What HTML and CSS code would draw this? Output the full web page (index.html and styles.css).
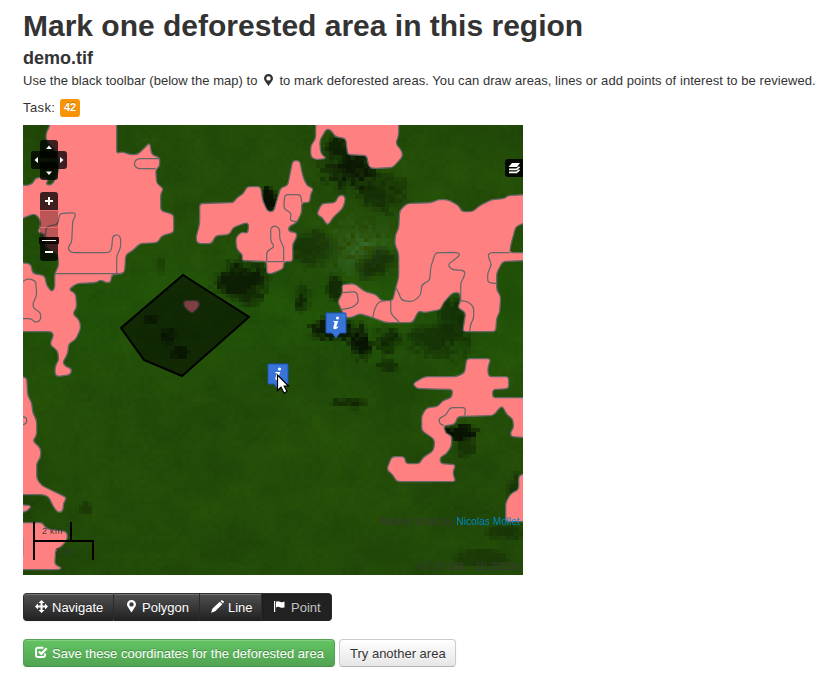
FILE: index.html
```html
<!DOCTYPE html>
<html lang="en">
<head>
<meta charset="utf-8">
<title>Mark one deforested area in this region</title>
<link rel="stylesheet" href="styles.css">
</head>
<body>
<main class="page">
  <h1><span>Mark one deforested area in this region</span></h1>
  <h3><span>demo.tif</span></h3>
  <p class="help"><span class="help-a">Use the black toolbar (below the map) to</span>
    <svg class="pin" width="9" height="12" viewBox="0 0 9 12"><path fill-rule="evenodd" d="M4.5 0A4.4 4.4 0 0 1 9 4.400C9 6 7.500 7.500 4.500 12C1.500 7.500 0 6 0 4.400A4.400 4.400 0 0 1 4.500 0ZM4.500 2.200a2.200 2.200 0 1 0 0 4.400a2.200 2.200 0 1 0 0-4.400Z"/></svg>
    <span class="help-b">to mark deforested areas. You can draw areas, lines or add points of interest to be reviewed.</span></p>
  <p class="task"><span>Task:</span><span class="label">42</span></p>

  <div class="map">
    <canvas class="terrain" id="terrain" width="116" height="104"></canvas>
    <svg class="layer" viewBox="23 125 500 450">
      <g id="areas" class="areas" transform="translate(-.3 .6)"></g>
      <g id="outlines" class="outlines" transform="translate(-.3 .6)"></g>
      <path class="sketch" d="M183 275L249 317L182 376L144 360L121 328Z"/>
      <defs>
        <g id="marker">
          <path class="marker" d="M1 .5H20a.5.5 0 0 1 .5.500V20a.5.5 0 0 1-.5.500H14.500L10.500 25.500L6.500 20.500H1a.5.500 0 0 1-.5-.5V1a.5.500 0 0 1 .5-.5Z"/>
          <circle cx="12" cy="5.500" r="1.600" fill="#fff"/>
          <path d="M8 8.600H12.700L10.800 14.600Q11.500 14.600 12.500 13.700L12.900 14.200Q11.300 16.700 9 16.700Q7.300 16.500 7.900 14.600L9.300 9.800L7.700 9.600Z" fill="#fff"/>
        </g>
      </defs>
      <use href="#marker" x="325.500" y="312.500"/>
      <use href="#marker" x="267.500" y="363.500"/>
      <path d="M277.500 375V390.500L281 387.200L284 393L287 391.500L284.200 386H288.500Z" fill="#fff" stroke="#000" stroke-width="1.200"/>
    </svg>

    <svg class="layer" viewBox="23 125 500 450">
      <g class="control">
        <rect x="40" y="140" width="18" height="18" rx="3"/>
        <rect x="40" y="162" width="18" height="18" rx="3"/>
        <rect x="31" y="151" width="18" height="18" rx="3"/>
        <rect x="49" y="151" width="18" height="18" rx="3"/>
        <path d="M40 210V195q0-3 3-3H55q3 0 3 3V210Z"/>
        <path d="M40 243H58V258q0 3-3 3H43q-3 0-3-3Z"/>
        <path d="M523 159H508q-3 0-3 3V174q0 3 3 3H523Z" fill-opacity=".88"/>
      </g>
      <path d="M40 210H58V243H40Z" fill="#300000" fill-opacity=".33"/>
      <path d="M40 210.500H58M40 227.500H58" stroke="#ff8080" stroke-opacity=".6"/>
      <rect x="39" y="237" width="20" height="7" rx="1" fill="#000" fill-opacity=".88"/>
      <path d="M46 149L49 145.500L52 149ZM46 171.500H52L49 175ZM38 157V163L34.500 160ZM60 157V163L63.500 160Z" fill="#fff"/>
      <path d="M42 240.500H56" stroke="#fff"/>
      <path d="M45 201H53M49 197V205M45 252H53" stroke="#fff" stroke-width="2"/>
      <path d="M512 163H520L517 167H508.500Z" fill="#fff"/>
      <path d="M509 169.300H516.500L519.500 166.800M509 172.300H516.500L519.500 169.800" fill="none" stroke="#fff" stroke-width="1.700"/>
    </svg>

    <div class="scale"><div class="km">2 km</div><div class="mi">2 mi</div></div>
    <div class="credit"><span>Marker Icons by</span> <a>Nicolas Mollet</a></div>
    <div class="position">-57.07556, -10.23598</div>
  </div>

  <div class="toolbar">
    <button class="dark w1"><svg viewBox="0 0 13 13"><path d="M6.500 0L9.500 3H7.500V5.500H10V3.500L13 6.500L10 9.500V7.500H7.500V10H9.500L6.500 13L3.500 10H5.500V7.500H3V9.500L0 6.500L3 3.500V5.500H5.500V3H3.500Z"/></svg><span>Navigate</span></button>
    <button class="dark w2"><svg viewBox="0 0 13 13"><path fill-rule="evenodd" d="M6.500 0A4.400 4.400 0 0 1 11 4.400C11 6 9.500 7.500 6.500 12.500C3.500 7.500 2 6 2 4.400A4.400 4.400 0 0 1 6.500 0ZM6.500 2.200a2.200 2.200 0 1 0 0 4.400a2.200 2.200 0 1 0 0-4.400Z"/></svg><span>Polygon</span></button>
    <button class="dark w3"><svg viewBox="0 0 13 13"><path d="M1.500 8.500L8.800 1.700L11.300 4.200L4.200 11.200L0 12.700ZM9.500 1L10.500.3Q11.200 0 12 .700L12.500 1.300Q13.200 2 12.500 2.700L12 3.500Z"/></svg><span>Line</span></button>
    <button class="dark w4 active"><svg viewBox="0 0 13 13"><path d="M1 1H2.200V12H1ZM3 1.700Q5 .6 7 1.700T11.500 1.500V7.200Q9 8.300 7 7.200T3 7.500Z"/></svg><span>Point</span></button>
  </div>

  <div class="actions">
    <button class="save"><svg viewBox="0 0 13 13"><path d="M8.500 1.700H3Q1 1.700 1 3.700V9Q1 11 3 11H8Q10 11 10 9V7.500" fill="none" stroke="#fff" stroke-width="1.900"/><path d="M3.800 5.500L6.300 7.800L11.700 2.200" fill="none" stroke="#fff" stroke-width="2.300"/></svg><span>Save these coordinates for the deforested area</span></button>
    <button class="other"><span>Try another area</span></button>
  </div>
</main>
<script src="map.js"></script>
</body>
</html>
```
FILE: styles.css
```css
body { margin: 0; background: #fff; color: #333; font: 13px/18px "Liberation Sans", Arial, sans-serif; }
.page { padding: 8px 0 0 23px; width: 827px; box-sizing: border-box; }
h1, h3, p { margin: 0; white-space: nowrap; }
h1 { font-size: 30px; line-height: 36px; }
h3 { font-size: 18px; line-height: 28px; }
.help { display: flex; align-items: center; height: 18px; }
.help-a { letter-spacing: .025px; }
.help-b { letter-spacing: .055px; }
.pin { fill: #333; margin: 0 6px 3px 7px; flex: none; }
.task { display: flex; align-items: center; height: 35px; }
.task span:first-child { width: 37px; letter-spacing: .4px; }
.label { background: #f89406; color: #fff; font-size: 11px; font-weight: bold; line-height: 17px; height: 18px; width: 20px; text-align: center; border-radius: 3px; text-shadow: 0 -1px 0 rgba(0,0,0,.25); }
.map { position: relative; width: 500px; height: 450px; overflow: hidden; background: #234d08; }
.terrain, .layer { position: absolute; top: 0; left: 0; width: 500px; height: 450px; }
.terrain { image-rendering: pixelated; }
.areas { fill: #ff8080; stroke: #666; stroke-width: 1.3; }
.outlines { fill: none; stroke: #666; stroke-width: 1.2; }
.sketch { fill: #000; fill-opacity: .5; stroke: #000; stroke-width: 2; }
.marker { fill: #3875d7; stroke: #1d55bd; }
.control { fill: #000; fill-opacity: .76; }
.scale { position: absolute; left: 10px; top: 397px; font-size: 9px; color: rgba(51,51,51,.9); }
.km { width: 35px; height: 18px; border: solid #000; border-width: 0 2px 2px; line-height: 18px; text-indent: 7px; letter-spacing: .3px; }
.mi { position: relative; width: 57px; height: 18px; border: solid #000; border-width: 0 2px; line-height: 18px; text-indent: 20px; letter-spacing: .3px; }
.mi::before { content: ""; position: absolute; left: 0; top: -2px; width: 59px; height: 2px; background: #000; }
.credit, .position { position: absolute; right: 3px; font-size: 10px; line-height: 12px; white-space: nowrap; color: #3b3838; }
.credit { top: 391px; letter-spacing: .1px; }
.credit a { color: #08c; }
.position { top: 436px; letter-spacing: .4px; }
.toolbar, .actions { display: flex; }
.toolbar { margin-top: 18px; }
.actions { margin-top: 18px; gap: 4px; }
button { box-sizing: border-box; display: flex; align-items: center; height: 28px; margin: 0; padding: 1px 10px 0 11px; font: inherit; border: 1px solid; border-radius: 4px; white-space: nowrap; box-shadow: inset 0 1px 0 rgba(255,255,255,.2), 0 1px 2px rgba(0,0,0,.05); }
button span { position: relative; top: .5px; }
button svg { width: 13px; height: 13px; margin: 0 4px 3px 0; flex: none; fill: #fff; }
.dark { color: #fff; background: linear-gradient(#505050, #222); border-color: #333 #2b2b2b #222; border-left-width: 0; border-radius: 0; text-shadow: 0 -1px 0 rgba(0,0,0,.25); }
.w1 { width: 91px; border-left-width: 1px; border-radius: 4px 0 0 4px; }
.w2 { width: 86px; }
.w3 { width: 62px; }
.w4 { width: 70px; border-radius: 0 4px 4px 0; }
.w4 svg { margin-right: 5px; }
.active { background: #222; color: rgba(255,255,255,.75); box-shadow: inset 0 2px 4px rgba(0,0,0,.15); }
.save { width: 312px; color: #fff; background: linear-gradient(#62c462, #51a351); border-color: #51a351 #51a351 #429442; text-shadow: 0 -1px 0 rgba(0,0,0,.25); }
.save span { letter-spacing: .02px; }
.other { width: 117px; padding: 1px 10px 0; color: #333; background: linear-gradient(#fff, #e6e6e6); border-color: #ccc #ccc #b3b3b3; text-shadow: 0 1px 1px rgba(255,255,255,.75); }
```
FILE: map.js
```js
// Polygons in map canvas coordinates, "x,y" vertices.
const areas = [
  "50,120 50,125 46,134 47,141 54,148 59,158 59,170 54,182 50,185 46,183 49,179 43,177 36,177 33,183 27,185 20,184 20,219 27,216 35,213 40,218 41,224 38,232 45,233 46,247 58,254 59,265 55,273 55,288 52,291 47,285 45,275 33,273 31,263 20,262 20,331 52,331 54,335 51,341 51,345 58,350 59,360 56,364 55,372 57,376 71,374 72,368 66,366 63,362 68,353 69,343 76,339 81,328 80,320 73,313 77,307 76,293 69,289 77,283 97,282 101,279 106,282 111,282 112,274 122,273 125,271 126,254 133,250 140,243 158,242 162,235 174,232 174,214 161,210 161,193 164,188 157,183 156,169 160,166 160,157 152,154 150,142 138,154 130,154 122,151 117,153 117,120",
  "20,376 27,377 28,395 32,402 33,412 37,420 37,435 33,440 41,448 41,457 37,462 37,478 42,485 67,497 64,502 63,511 58,512 53,505 49,496 43,494 20,494",
  "20,504 32,505 27,511 20,512",
  "20,522 43,522 46,528 67,531 68,538 63,545 56,549 55,564 62,567 60,569 20,569",
  "200,203 234,202 237,197 244,193 247,186 261,186 263,200 268,211 274,211 277,200 281,187 288,185 290,175 293,160 300,160 303,175 307,185 314,188 311,193 310,202 302,202 302,212 297,222 289,226 289,231 297,232 297,237 293,243 293,261 284,261 284,268 272,273 267,273 267,261 242,260 243,254 237,249 236,237 242,231 248,233 249,224 247,222 233,227 230,234 216,235 212,243 198,243 196,238 200,223",
  "316,120 316,138 311,145 311,156 315,159 327,158 321,153 320,140 327,128 332,130 335,136 346,138 348,154 367,155 369,166 373,168 393,167 403,156 402,150 396,143 399,135 399,120",
  "317,214 322,203 336,202 338,196 343,194 346,198 343,208 333,217 329,224 326,223 323,217",
  "400,210 407,203 432,202 438,199 448,199 459,205 462,211 473,211 480,205 492,199 505,198 508,195 526,194 526,222 516,226 511,245 510,252 526,252 526,260 503,261 497,272 497,290 501,295 500,312 497,317 496,331 463,331 466,312 458,307 461,300 460,292 453,292 443,303 441,309 424,312 419,310 413,322 386,322 373,317 360,313 352,317 346,317 341,308 338,301 343,292 342,284 355,283 365,291 377,294 381,300 393,300 396,287 399,277 399,253 395,243 396,233 399,228",
  "413,383 425,376 457,376 465,372 467,358 491,358 488,368 489,376 509,376 509,388 493,389 493,397 526,397 526,437 511,436 511,431 514,427 513,418 507,414 503,406 500,407 494,415 458,416 455,424 444,425 446,433 452,435 452,445 447,453 440,457 441,463 456,464 453,472 456,481 397,481 393,474 387,469 392,456 405,456 406,463 420,463 423,457 434,450 435,439 422,430 422,415 427,407 438,406 443,400 452,397 453,389 417,388",
  "526,473 519,475 519,489 511,493 506,502 506,521 526,521",
  "184,300 199,300 200,306 192,313 184,306"
];
const outlines = [
  "160,158 137,158 134,163 137,168 156,168",
  "46,247 46,228 50,225 58,224 60,213 75,212 76,215 73,220 72,242 68,247 71,252 110,252 112,248 113,235 119,234 121,238 121,247 117,255 117,273",
  "55,273 122,273",
  "23,281 28,278 36,280 37,295 33,303 34,308 41,312 41,320 35,322 32,318 23,318",
  "23,416 27,417 27,423 23,424", "23,538 23,555",
  "302,202 301,194 285,194 284,208 292,213 290,220 297,221",
  "267,261 267,251 275,246 271,241 271,227 275,225 280,228 280,239 284,246 284,261", "267,261 284,261",
  "461,300 461,282 465,275 465,270 452,269 448,264 460,255 459,252 437,252 435,254 431,267 430,280 422,284 421,295 413,301 402,300 398,290 396,287",
  "510,252 490,252 488,255 492,264 488,272 488,282 497,283",
  "461,300 468,301 474,306 474,318 471,323 470,331",
  "373,317 375,308 379,301 386,300", "391,300 391,313 398,320 400,322",
  "343,292 357,291 359,302 352,307 347,308 341,309",
  "465,415 466,407 450,407 447,414 439,418 440,423 444,425"
];

// Builds a path whose corners are cut by up to 3 units and rounded.
function roundedPath(text, closed) {
  const p = text.split(" ").map(s => s.split(",").map(Number));
  const n = p.length;
  const toward = (a, b) => {
    const l = Math.hypot(b[0] - a[0], b[1] - a[1]) || 1;
    const k = Math.min(3.3, l / 2) / l;
    return [a[0] + (b[0] - a[0]) * k, a[1] + (b[1] - a[1]) * k];
  };
  let d = closed ? "" : "M" + p[0];
  for (let i = closed ? 0 : 1; i < (closed ? n : n - 1); i++) {
    const start = toward(p[i], p[(i + n - 1) % n]);
    const end = toward(p[i], p[(i + 1) % n]);
    d += (d ? "L" : "M") + start + "Q" + p[i] + " " + end;
  }
  return d + (closed ? "Z" : "L" + p[n - 1]);
}
function draw(id, list, closed) {
  const group = document.getElementById(id);
  for (const item of list) {
    const path = document.createElementNS("http://www.w3.org/2000/svg", "path");
    path.setAttribute("d", roundedPath(item, closed));
    group.append(path);
  }
}
draw("areas", areas, true);
draw("outlines", outlines, false);

// Satellite ground: coarse noise with dark clearings [x, y, rx, ry, strength].
const dark = [[352,166,24,22,.85],[337,150,12,14,.7],[378,190,20,18,.5],[268,200,9,12,1],[238,277,20,14,.8],[245,291,12,10,.6],[300,295,7,11,.65],[332,286,7,11,.6],[310,246,20,14,.4],[375,263,16,12,.5],[335,328,20,10,.85],[357,340,9,14,.95],[385,337,11,11,.65],[453,325,16,24,.5],[428,338,20,13,.45],[455,430,14,7,.95],[463,446,7,9,.4],[165,335,9,7,.8],[148,317,6,5,.5],[177,350,8,5,.6],[345,401,14,4,.5],[386,365,9,6,.45],[515,490,8,16,.4],[505,530,16,7,.35],[480,556,24,7,.3],[353,402,5,4,.6],[158,262,5,8,.25],[83,507,6,5,.3],[510,305,10,22,.1]];
const ctx = document.getElementById("terrain").getContext("2d");
const img = ctx.createImageData(116, 104);
const hash = (x, y) => { const v = Math.sin(x * 127.1 + y * 311.7) * 43758.5453; return v - Math.floor(v); };
const smooth = (x, y) => {
  const a = Math.floor(x), b = Math.floor(y), u = x - a, v = y - b;
  return (hash(a, b) * (1 - u) + hash(a + 1, b) * u) * (1 - v) + (hash(a, b + 1) * (1 - u) + hash(a + 1, b + 1) * u) * v;
};
for (let y = 0; y < 104; y++) for (let x = 0; x < 116; x++) {
  const px = 23 + x * 4.31, py = 125 + y * 4.33;
  const broad = smooth(x / 14, y / 11) - .5, mid = smooth(x / 4 + 90, y / 3) - .5, fine = hash(x + 3, y + 7) - .5;
  let shade = 0;
  for (const [cx, cy, rx, ry, s] of dark) {
    const q = ((px - cx) / rx) ** 2 + ((py - cy) / ry) ** 2;
    shade = Math.max(shade, s * Math.max(0, Math.min(1, 1.2 - q * .6 + fine * .7 + mid * 1.1)));
  }
  const glow = Math.exp(-(((px - 358) / 32) ** 2 + ((py - 247) / 24) ** 2));
  const band = Math.exp(-(((py - 310) / 75) ** 2));
  const k = 1 - shade * .8;
  const i = (y * 116 + x) * 4;
  img.data[i] = (34 + broad * 5 + mid * 5 + fine * 3 + glow * 14) * k;
  img.data[i + 1] = (74 + band * 9 + broad * 9 + mid * 8 + fine * 3 + glow * (10 + fine * 25)) * k;
  img.data[i + 2] = (8 + fine * 2 + glow * (12 + fine * 40)) * k;
  img.data[i + 3] = 255;
}
ctx.putImageData(img, 0, 0);
```
